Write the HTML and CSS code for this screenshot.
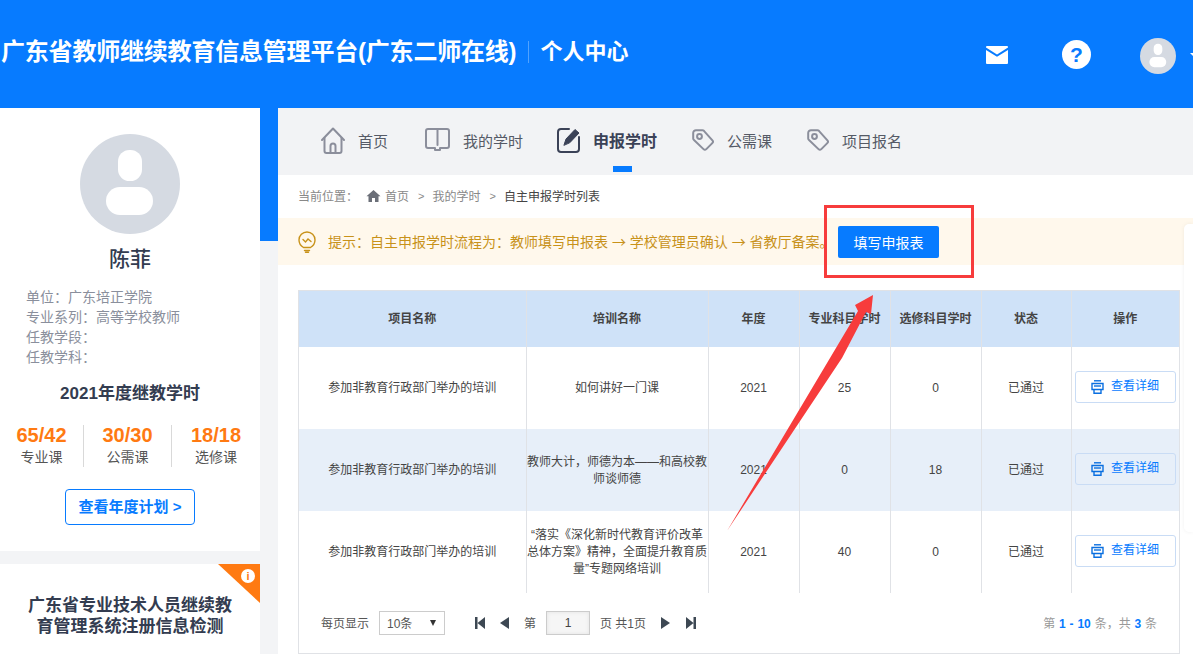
FILE: index.html
```html
<!DOCTYPE html>
<html lang="en">
<head>
    <meta charset="UTF-8">
    <meta name="viewport" content="width=device-width, initial-scale=1.0">
    <title>自主申报学时列表</title>
    <link rel="stylesheet" href="styles.css">
</head>
<body>
    <header class="top-bar">
        <div class="brand">
            <span class="brand-name">广东省教师继续教育信息管理平台(广东二师在线)</span>
            <span class="brand-sub">个人中心</span>
        </div>
        <div class="top-tools">
            <svg class="mail-icon" viewBox="0 0 22 18"><path d="M1 0h20a1 1 0 0 1 1 1v.6L11 8.4 0 1.6V1a1 1 0 0 1 1-1z" fill="#fff"/><path d="M0 4l11 6.800L22 4v13a1 1 0 0 1-1 1H1a1 1 0 0 1-1-1z" fill="#fff"/></svg>
            <span class="help-icon">?</span>
            <svg class="top-avatar" viewBox="0 0 100 100"><circle cx="50" cy="50" r="50" fill="#d5dae2"/><rect x="38" y="16" width="24" height="31" rx="11.5" fill="#fff"/><rect x="26" y="53" width="47" height="28" rx="14" fill="#fff"/></svg>
            <span class="top-caret"></span>
        </div>
    </header>

    <div class="page">
        <aside class="side">
            <section class="profile">
                <svg class="avatar" viewBox="0 0 100 100"><circle cx="50" cy="50" r="50" fill="#d5dae2"/><rect x="38" y="16" width="24" height="31" rx="11.5" fill="#fff"/><rect x="26" y="53" width="47" height="28" rx="14" fill="#fff"/></svg>
                <h1 class="profile-name">陈菲</h1>
                <ul class="profile-info">
                    <li>单位：广东培正学院</li>
                    <li>专业系列：高等学校教师</li>
                    <li>任教学段：</li>
                    <li>任教学科：</li>
                </ul>
                <h2 class="year-title">2021年度继教学时</h2>
                <div class="stats">
                    <div class="stat"><strong>65/42</strong><span>专业课</span></div>
                    <div class="stat"><strong>30/30</strong><span>公需课</span></div>
                    <div class="stat"><strong>18/18</strong><span>选修课</span></div>
                </div>
                <a href="#" class="plan-button">查看年度计划 &gt;</a>
            </section>
            <section class="check-card">
                <span class="corner-flag"><span class="corner-info">i</span></span>
                <h3>广东省专业技术人员继续教育管理系统注册信息检测</h3>
            </section>
        </aside>

        <main class="main">
            <nav class="tabs">
                <a href="#" class="tab tab-home">
                    <svg width="24" height="27" viewBox="0 0 24 27" fill="none" stroke="#8b8e9b" stroke-width="2" stroke-linejoin="round" stroke-linecap="round"><path d="M1 13L12 1.500 23 13"/><path d="M3.500 11v13a2 2 0 0 0 2 2h13a2 2 0 0 0 2-2V11"/><path d="M9.500 26v-7a2.500 2.500 0 0 1 5 0v7"/></svg>
                    首页
                </a>
                <a href="#" class="tab">
                    <svg width="25" height="24" viewBox="0 0 25 24" fill="none" stroke="#8b8e9b" stroke-width="2" stroke-linejoin="round" stroke-linecap="round"><path d="M10 20H3a2 2 0 0 1-2-2V3a2 2 0 0 1 2-2h19a2 2 0 0 1 2 2v15a2 2 0 0 1-2 2h-7v2h-5z"/><path d="M12.500 1v16"/></svg>
                    我的学时
                </a>
                <a href="#" class="tab active">
                    <svg width="23" height="26" viewBox="0 0 23 26" fill="none" stroke="#3b4257" stroke-width="2" stroke-linecap="round"><path d="M12 2H4a3 3 0 0 0-3 3v17a3 3 0 0 0 3 3h15a3 3 0 0 0 3-3V10"/><path d="M7 18l2-6L18 2.500l4 3.500-9 9.500z" fill="#3b4257" stroke-width="1"/></svg>
                    申报学时
                </a>
                <a href="#" class="tab">
                    <svg width="22" height="22" viewBox="0 0 22 22" fill="none" stroke="#8b8e9b" stroke-width="2" stroke-linejoin="round"><path d="M4 1.200h6.500a2 2 0 0 1 1.400.6l8.500 9.500a2 2 0 0 1-.1 2.800l-6 6a2 2 0 0 1-2.800 0L2 11a2 2 0 0 1-.8-1.600V4a2.800 2.800 0 0 1 2.800-2.800z"/><circle cx="7.500" cy="7.500" r="2.400"/></svg>
                    公需课
                </a>
                <a href="#" class="tab tab-last">
                    <svg width="22" height="22" viewBox="0 0 22 22" fill="none" stroke="#8b8e9b" stroke-width="2" stroke-linejoin="round"><path d="M4 1.200h6.500a2 2 0 0 1 1.400.6l8.500 9.500a2 2 0 0 1-.1 2.800l-6 6a2 2 0 0 1-2.800 0L2 11a2 2 0 0 1-.8-1.600V4a2.800 2.800 0 0 1 2.800-2.800z"/><circle cx="7.500" cy="7.500" r="2.400"/></svg>
                    项目报名
                </a>
            </nav>

            <div class="crumbs">
                <span class="crumb-label">当前位置：</span>
                <svg class="crumb-home" viewBox="0 0 14 12"><path d="M7 0L0 6.200h2V12h3.500V8h3v4H12V6.200h2z" fill="#6b6f78"/></svg>
                <a href="#">首页</a>
                <span class="crumb-sep">&gt;</span>
                <a href="#">我的学时</a>
                <span class="crumb-sep">&gt;</span>
                <span class="crumb-now">自主申报学时列表</span>
            </div>

            <div class="notice">
                <svg width="18" height="22" viewBox="0 0 18 22" fill="none" stroke="#c8921a" stroke-width="1.400" stroke-linecap="round"><path d="M5.500 16.500C3 15 1 12.500 1 9a8 8 0 0 1 16 0c0 3.500-2 6-4.500 7.500z"/><path d="M5 8.500l2.500 2.500L10 8l3 2.500"/><path d="M6.500 19.500h5M7.500 21.300h3"/></svg>
                <p>提示：自主申报学时流程为：教师填写申报表 <span class="flow-arrow">→</span> 学校管理员确认 <span class="flow-arrow">→</span> 省教厅备案。</p>
                <button class="fill-button">填写申报表</button>
            </div>

            <div class="list-box">
                <table class="list">
                    <colgroup>
                        <col class="col-project"><col class="col-train"><col class="col-year"><col class="col-major"><col class="col-elect"><col class="col-state"><col class="col-op">
                    </colgroup>
                    <thead>
                        <tr><th>项目名称</th><th>培训名称</th><th>年度</th><th>专业科目学时</th><th>选修科目学时</th><th>状态</th><th>操作</th></tr>
                    </thead>
                    <tbody>
                        <tr>
                            <td>参加非教育行政部门举办的培训</td><td>如何讲好一门课</td><td>2021</td><td>25</td><td>0</td><td>已通过</td>
                            <td><a href="#" class="detail-button"><svg width="13" height="14" viewBox="0 0 13 14" fill="none" stroke="#0a6fe0" stroke-width="1.400"><path d="M3 .8h7"/><path d="M1 3.500h11v6H1z"/><path d="M3 9.500v3.700h7V9.500"/><path d="M3 6h7"/></svg>查看详细</a></td>
                        </tr>
                        <tr>
                            <td>参加非教育行政部门举办的培训</td><td>教师大计，师德为本——和高校教师谈师德</td><td>2021</td><td>0</td><td>18</td><td>已通过</td>
                            <td><a href="#" class="detail-button"><svg width="13" height="14" viewBox="0 0 13 14" fill="none" stroke="#0a6fe0" stroke-width="1.400"><path d="M3 .8h7"/><path d="M1 3.500h11v6H1z"/><path d="M3 9.500v3.700h7V9.500"/><path d="M3 6h7"/></svg>查看详细</a></td>
                        </tr>
                        <tr>
                            <td>参加非教育行政部门举办的培训</td><td>“落实《深化新时代教育评价改革总体方案》精神，全面提升教育质量”专题网络培训</td><td>2021</td><td>40</td><td>0</td><td>已通过</td>
                            <td><a href="#" class="detail-button"><svg width="13" height="14" viewBox="0 0 13 14" fill="none" stroke="#0a6fe0" stroke-width="1.400"><path d="M3 .8h7"/><path d="M1 3.500h11v6H1z"/><path d="M3 9.500v3.700h7V9.500"/><path d="M3 6h7"/></svg>查看详细</a></td>
                        </tr>
                    </tbody>
                </table>

                <div class="pager">
                    <span>每页显示</span>
                    <span class="size-select">10条</span>
                    <div class="pager-nav">
                        <svg width="10" height="12" viewBox="0 0 10 12"><path d="M0 0h2.500v12H0zM10 0v12L2.500 6z" fill="#3d4853"/></svg>
                        <svg width="9" height="12" viewBox="0 0 9 12"><path d="M9 0v12L0 6z" fill="#3d4853"/></svg>
                    </div>
                    <span class="page-word">第</span>
                    <input class="page-input" type="text" value="1">
                    <span class="page-total">页 共1页</span>
                    <div class="pager-nav pager-next">
                        <svg width="9" height="12" viewBox="0 0 9 12"><path d="M0 0v12l9-6z" fill="#3d4853"/></svg>
                        <svg width="10" height="12" viewBox="0 0 10 12"><path d="M0 0v12l7.500-6zM7.500 0H10v12H7.500z" fill="#3d4853"/></svg>
                    </div>
                    <span class="pager-count">第 <b>1 - 10</b> 条，共 <b>3</b> 条</span>
                </div>
            </div>
        </main>
    </div>

    <div class="float-panel"></div>

    <!-- 标注 -->
    <div class="mark-box"></div>
    <svg class="mark-arrow" width="1193" height="654" viewBox="0 0 1193 654"><path d="M727 531L858 311 855 305 873 295 871 314 866 312 842 358z" fill="#f73c3c"/></svg>
</body>
</html>
```

FILE: styles.css
```css
* {
    margin: 0;
    padding: 0;
    box-sizing: border-box;
}

html, body {
    height: 654px;
    overflow: hidden;
}

body {
    font-family: "Liberation Sans", "Noto Sans CJK SC", sans-serif;
    font-size: 12px;
    color: #444;
    background: #f3f4f6;
    position: relative;
}

a {
    text-decoration: none;
    color: inherit;
}

ul {
    list-style: none;
}

/* 顶部 */
.top-bar {
    height: 108px;
    background: #077bff;
    color: #fff;
    display: flex;
    align-items: center;
    padding-bottom: 6px;
}

.brand {
    display: flex;
    align-items: center;
    flex: 1;
    white-space: nowrap;
    padding-left: 1px;
}

.brand-name {
    font-size: 24px;
    font-weight: 700;
    padding-right: 12px;
    letter-spacing: -0.2px;
    margin-top: -4px;
}

.brand-sub {
    font-size: 22px;
    font-weight: 700;
    border-left: 1px solid rgba(255,255,255,0.3);
    padding-left: 11px;
    line-height: 22px;
    margin-top: 1px;
}

.top-tools {
    flex: 0 0 207px;
    min-width: 0;
    display: flex;
    align-items: center;
    margin-top: 7px;
}

.mail-icon {
    width: 22px;
    height: 18px;
    margin-right: 54px;
    flex-shrink: 0;
}

.help-icon {
    flex-shrink: 0;
    width: 29px;
    height: 29px;
    border-radius: 50%;
    background: #fff;
    color: #077bff;
    font-size: 21px;
    font-weight: 700;
    line-height: 29px;
    text-align: center;
    margin-right: 49px;
}

.top-avatar {
    width: 36px;
    height: 36px;
    flex-shrink: 0;
    margin: 3px 14px 0 0;
}

.top-caret {
    flex-shrink: 0;
    border-left: 4px solid transparent;
    border-right: 4px solid transparent;
    border-top: 4px solid #fff;
}

/* 主体 */
.page {
    display: flex;
    height: 546px;
    background: linear-gradient(#077bff 133px, #f3f4f6 133px);
}

.side {
    width: 260px;
    flex-shrink: 0;
    margin-right: 18px;
}

.profile {
    height: 443px;
    background: #fff;
    padding-top: 26px;
    display: flex;
    flex-direction: column;
    align-items: center;
}

.avatar {
    width: 100px;
    height: 100px;
}

.profile-name {
    font-size: 21px;
    font-weight: 500;
    color: #333c50;
    line-height: 30px;
    margin-top: 10px;
}

.profile-info {
    align-self: flex-start;
    margin: 13px 0 0 26px;
    font-size: 14px;
    line-height: 20px;
    color: #8a8f9c;
}

.year-title {
    font-size: 17px;
    font-weight: 700;
    color: #333c50;
    line-height: 24px;
    margin-top: 15px;
}

.stats {
    display: flex;
    width: 260px;
    margin-top: 19px;
}

.stat {
    height: 42px;
    display: flex;
    flex-direction: column;
    align-items: center;
    border-right: 1px solid #d9d9d9;
    width: 88px;
}

.stat:first-child {
    width: 84px;
}

.stat:last-child {
    border-right: none;
}

.stat strong {
    font-size: 20px;
    line-height: 21px;
    color: #ff7a12;
}

.stat span {
    font-size: 14px;
    line-height: 22px;
    color: #555;
}

.plan-button {
    width: 130px;
    height: 36px;
    margin-top: 22px;
    border: 1px solid #077bff;
    border-radius: 4px;
    color: #077bff;
    font-size: 15px;
    font-weight: 700;
    line-height: 34px;
    text-align: center;
}

.check-card {
    height: 90px;
    margin-top: 13px;
    background: #fff;
    padding: 31px 24px 0;
    position: relative;
}

.check-card h3 {
    font-size: 17px;
    font-weight: 700;
    line-height: 21px;
    color: #333c50;
    text-align: center;
}

.corner-flag {
    position: absolute;
    top: 0;
    right: 0;
    width: 42px;
    height: 39px;
    background: #ff7a12;
    clip-path: polygon(0 0, 100% 0, 100% 100%);
}

.corner-info {
    position: absolute;
    top: 5px;
    right: 5px;
    width: 14px;
    height: 14px;
    border-radius: 50%;
    background: #fff;
    color: #ff7a12;
    font-size: 11px;
    font-weight: 700;
    line-height: 14px;
    text-align: center;
}

.main {
    flex: 1;
    background: #fff;
    min-width: 0;
}

/* 导航 */
.tabs {
    height: 67px;
    background: #f2f3f5;
    display: flex;
    align-items: center;
    padding: 0 0 3px 43px;
    gap: 34px;
}

.tab {
    display: flex;
    align-items: center;
    gap: 13px;
    height: 100%;
    font-size: 15px;
    color: #555a66;
    position: relative;
}

.tab-home {
    margin-right: 3px;
}

.tab-last {
    margin-left: 1px;
}

.tab.active {
    padding-right: 1px;
    font-size: 16px;
    font-weight: 700;
    color: #3b4257;
}

.tab.active::after {
    content: '';
    position: absolute;
    left: 56px;
    bottom: 0;
    width: 19px;
    height: 6px;
    background: #077bff;
}

/* 面包屑 */
.crumbs {
    height: 43px;
    display: flex;
    align-items: center;
    padding: 0 0 2px 20px;
    color: #888;
}

.crumb-home {
    width: 15px;
    height: 12px;
    margin: 0 4px 0 8px;
}

.crumb-sep {
    margin: 0 8px 0 9px;
    font-size: 11px;
}

.crumb-now {
    color: #444;
}

/* 提示 */
.notice {
    height: 47px;
    background: #fff8ec;
    display: flex;
    align-items: center;
    padding-left: 20px;
    color: #c8921a;
    font-size: 14px;
}

.notice p {
    margin: -2px 0 0 12px;
    width: 496px;
    white-space: nowrap;
}

.flow-arrow {
    font-family: "Noto Sans CJK SC", sans-serif;
    font-size: 14px;
}

.fill-button {
    width: 101px;
    height: 32px;
    margin-left: 14px;
    background: #077bff;
    border: none;
    border-radius: 2px;
    color: #fff;
    font: inherit;
    cursor: pointer;
}

/* 列表 */
.list-box {
    margin: 25px 13px 0 20px;
    height: 364px;
    border: 1px solid #e0e2e6;
    border-top: none;
}

.list {
    width: 100%;
    table-layout: fixed;
    border-collapse: collapse;
    text-align: center;
}

.col-project { width: 227px; }
.col-train { width: 182px; }
.col-year { width: 91px; }
.col-major { width: 91px; }
.col-elect { width: 91px; }
.col-state { width: 90px; }

.list th {
    height: 56px;
    padding-bottom: 2px;
    background: #cfe2f8;
    border-left: 1px solid #e0e2e6;
    border-top: 1px solid #e0e2e6;
    font-weight: 700;
    color: #444;
}

.list th:first-child,
.list td:first-child {
    border-left: none;
}

.list td {
    height: 82px;
    padding-top: 2px;
    border-left: 1px solid #e0e2e6;
    line-height: 17px;
}

.list tbody tr:nth-child(even) td {
    background: #e7eff9;
}

.detail-button {
    display: flex;
    align-items: center;
    justify-content: center;
    gap: 7px;
    width: 101px;
    height: 32px;
    margin: -4px 0 0 3px;
    border: 1px solid #c9dcf5;
    border-radius: 3px;
    color: #077bff;
}

/* 分页 */
.pager {
    height: 60px;
    display: flex;
    align-items: center;
    padding-left: 22px;
    color: #555;
}

.size-select {
    width: 66px;
    height: 24px;
    margin-left: 10px;
    border: 1px solid #ccc;
    padding-left: 7px;
    line-height: 24px;
    position: relative;
}

.size-select::after {
    content: '';
    position: absolute;
    right: 8px;
    top: 8px;
    border-left: 3px solid transparent;
    border-right: 3px solid transparent;
    border-top: 6px solid #333;
}

.pager-nav {
    display: flex;
    align-items: center;
    gap: 15px;
    margin-left: 30px;
}

.pager-next {
    gap: 16px;
    margin-left: 15px;
}

.page-word {
    margin-left: 15px;
}

.page-input {
    width: 44px;
    height: 24px;
    margin-left: 10px;
    border: 1px solid #ccc;
    background: #f6f6f6;
    box-shadow: inset 0 0 4px rgba(0,0,0,0.08);
    text-align: center;
    font: inherit;
    color: #444;
}

.page-total {
    margin-left: 10px;
}

.pager-count {
    margin-left: auto;
    margin-right: 22px;
    font-size: 12px;
    color: #999;
    word-spacing: 0.5px;
}

.pager-count b {
    color: #077bff;
}

/* 浮层 */
.float-panel {
    position: absolute;
    top: 224px;
    left: 1184px;
    width: 9px;
    height: 308px;
    background: #fff;
    border-radius: 5px 0 0 5px;
    box-shadow: 0 0 4px rgba(0,0,0,0.06);
}

.mark-box {
    position: absolute;
    left: 824px;
    top: 205px;
    width: 150px;
    height: 73px;
    border: 3px solid #f73c3c;
}

.mark-arrow {
    position: absolute;
    left: 0;
    top: 0;
    pointer-events: none;
}
```
